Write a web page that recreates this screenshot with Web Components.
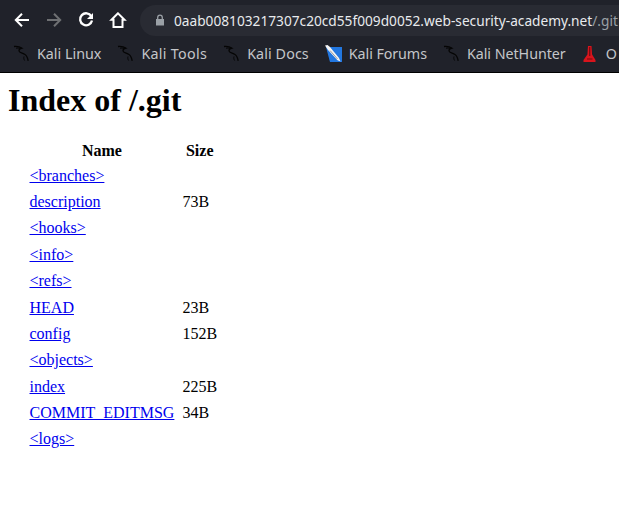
<!DOCTYPE html>
<html><head><meta charset="utf-8"><style>
html,body{margin:0;padding:0;background:#fff;height:100%;overflow:hidden}
</style></head><body>
<browser-bar>
<nav-icon slot="nav" kind="back"></nav-icon><nav-icon slot="nav" kind="forward"></nav-icon><nav-icon slot="nav" kind="reload"></nav-icon><nav-icon slot="nav" kind="home"></nav-icon>
<address-box slot="address"><span>0aab008103217307c20cd55f009d0052.web-security-academy.net</span><span style="color:#9aa0a6">/.git</span></address-box>
<book-mark slot="marks" icon="kali">Kali Linux</book-mark>
<book-mark slot="marks" icon="kali" style="letter-spacing:.3px">Kali Tools</book-mark>
<book-mark slot="marks" icon="kali" style="letter-spacing:.1px">Kali Docs</book-mark>
<book-mark slot="marks" icon="forum" style="letter-spacing:-.08px">Kali Forums</book-mark>
<book-mark slot="marks" icon="kali" style="letter-spacing:-.05px">Kali NetHunter</book-mark>
<book-mark slot="marks" icon="exploit">O</book-mark>
</browser-bar>
<dir-index heading="Index of /.git">
<dir-row href="#" name="&lt;branches&gt;"></dir-row>
<dir-row href="#" name="description" size="73B"></dir-row>
<dir-row href="#" name="&lt;hooks&gt;"></dir-row>
<dir-row href="#" name="&lt;info&gt;"></dir-row>
<dir-row href="#" name="&lt;refs&gt;"></dir-row>
<dir-row href="#" name="HEAD" size="23B"></dir-row>
<dir-row href="#" name="config" size="152B"></dir-row>
<dir-row href="#" name="&lt;objects&gt;"></dir-row>
<dir-row href="#" name="index" size="225B"></dir-row>
<dir-row href="#" name="COMMIT_EDITMSG" size="34B"></dir-row>
<dir-row href="#" name="&lt;logs&gt;"></dir-row>
</dir-index>
<script>
const ICONS={
back:'<path d="M19 12H6.500M12 5.800 5.800 12l6.200 6.200" fill="none" stroke="currentColor" stroke-width="2"/>',
forward:'<path d="M5 12h12.500M12 5.800l6.200 6.200-6.200 6.200" fill="none" stroke="currentColor" stroke-width="2"/>',
reload:'<path d="M17.300 8.200A6 6 0 1 0 18 12.500" fill="none" stroke="currentColor" stroke-width="2.300"/><path d="M19 5v6h-6z" fill="currentColor"/>',
home:'<path d="M12 5.300 5.500 11.800h2V19h9v-7.200h2z" fill="none" stroke="currentColor" stroke-width="2"/>'};
const MARKS={
kali:'<path d="M1 1.500C4 1.200 7 1.800 9 3.200 7 3.600 5.800 4.600 6 6c.3 1.800 3.500 2 6 3.500 1.800 1.200 2.600 3.500 3.200 6.300" fill="none" stroke="#050505" stroke-width="1.300"/><path d="M3 3.200c1.500-.3 3-.2 4.300.6M11 11.500c-.4 1.500-.2 2.800.6 4" fill="none" stroke="#050505" stroke-width="1"/>',
forum:'<path d="M1 2h16v15H5z" fill="#2277e0"/><path d="M0 .5l2.500-.5 2.500 2 9 11 1.500 3.500-3-1.300L3 5z" fill="#f4f4f4"/><path d="M5 5.500l7.500 8.500" stroke="#777" stroke-width=".7"/>',
exploit:'<path d="M6 1h3.500l.6 8.500 3.400 5.500v2h-12v-2L5.400 9.500z" fill="#d8141c"/><path d="M7.700 2v9" stroke="#7a0d12" stroke-width="1.300"/><path d="M5 14h5.500" stroke="#8a0d12" stroke-width="1.300"/>'};
function def(name,css,html){customElements.define(name,class extends HTMLElement{
constructor(){super();this.attachShadow({mode:'open'});}
connectedCallback(){this.shadowRoot.innerHTML='<style>'+css+'</style>'+(typeof html==='function'?html(this):html);}
});}
def('browser-bar',`:host{display:block;background:#20222a;font-family:"Noto Sans",sans-serif;height:72px;border-bottom:1px solid #000}
.top{display:flex;align-items:center;height:40px;padding:0 0 0 10px}
.nav{display:flex;gap:8px;margin-right:10px;align-items:center}
.marks{display:flex;align-items:center;height:27px;padding-left:13px;gap:16px;overflow:hidden;white-space:nowrap}`,
`<div class="top"><div class="nav"><slot name="nav"></slot></div><slot name="address"></slot></div><div class="marks"><slot name="marks"></slot></div>`);
def('nav-icon',`:host{display:block;width:24px;height:24px;color:#fff}:host([kind=forward]){color:#6e7073}svg{display:block}`,
e=>`<svg width="24" height="24" viewBox="0 0 24 24">${ICONS[e.getAttribute('kind')]}</svg>`);
def('address-box',`:host{display:flex;flex:1;min-width:0;align-items:center;height:31px;margin-top:1px;padding-bottom:1px;box-sizing:border-box;background:#292b33;border-radius:16px 0 0 16px;color:#e8eaed;font-size:13.700px;white-space:nowrap;overflow:hidden;padding-left:14px}
svg{margin-right:8px;flex:none}`,
`<svg width="12" height="12" viewBox="0 0 12 12"><path d="M2 5h8v6.500H2z" fill="#9aa0a6"/><path d="M3.700 5V3.500a2.300 2.300 0 0 1 4.600 0V5" fill="none" stroke="#9aa0a6" stroke-width="1.300"/></svg><slot></slot>`);
def('book-mark',`:host{display:flex;align-items:center;color:#c4c6c9;font-size:14.300px;gap:7px;flex:none}svg{display:block;flex:none}`,
e=>`<svg width="17" height="17" viewBox="0 0 17 17">${MARKS[e.getAttribute('icon')]}</svg><slot></slot>`);
def('dir-index',`:host{display:block;font-family:"Liberation Serif",serif;font-size:16px;color:#000;padding:9px 8px 0}
h1{font-size:32px;margin:0 0 20px;line-height:37px}
.t{display:grid;grid-template-columns:auto auto;justify-content:start;grid-template-rows:23.400px;grid-auto-rows:26.400px;margin-left:17.500px;align-items:center}
.h{font-weight:bold;text-align:center;padding:0 4px}`,
e=>`<h1>${e.getAttribute('heading')}</h1><div class="t"><div class="h">Name</div><div class="h">Size</div><slot></slot></div>`);
def('dir-row',`:host{display:contents}div{padding:0 4px;align-self:center}a{color:#00e;text-decoration:underline}`,
e=>{const d=document.createElement('div');d.textContent=e.getAttribute('name');return `<div><a href="${e.getAttribute('href')}">${d.innerHTML}</a></div><div>${e.getAttribute('size')||''}</div>`});
</script>
</body></html>
